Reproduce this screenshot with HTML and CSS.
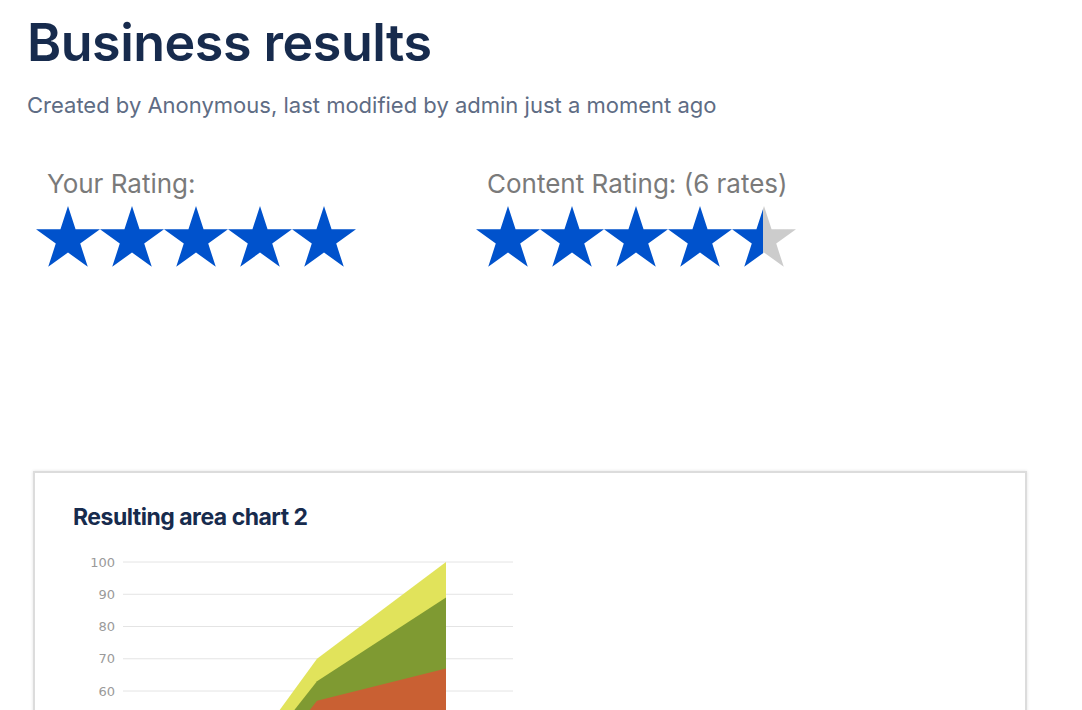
FILE: index.html
```html
<!DOCTYPE html>
<html lang="en">
<head>
    <meta charset="UTF-8">
    <meta name="viewport" content="width=device-width, initial-scale=1.0">
    <title>Business results</title>
    <link rel="stylesheet" href="styles.css">
</head>
<body>
    <div class="page">
        <h1 class="page-title">Business results</h1>
        <p class="page-meta">Created by Anonymous, last modified by admin just a moment ago</p>

        <div class="ratings">
            <div class="rating">
                <div class="rating-label">Your Rating:</div>
                <div class="stars">
                    <svg class="star" viewBox="0 0 64 61"><polygon class="on" points="32,0 39.55,23.25 64,23.25 44.22,37.62 51.78,60.87 32,46.5 12.22,60.87 19.78,37.62 0,23.25 24.45,23.25"/></svg>
                    <svg class="star" viewBox="0 0 64 61"><polygon class="on" points="32,0 39.55,23.25 64,23.25 44.22,37.62 51.78,60.87 32,46.5 12.22,60.87 19.78,37.62 0,23.25 24.45,23.25"/></svg>
                    <svg class="star" viewBox="0 0 64 61"><polygon class="on" points="32,0 39.55,23.25 64,23.25 44.22,37.62 51.78,60.87 32,46.5 12.22,60.87 19.78,37.62 0,23.25 24.45,23.25"/></svg>
                    <svg class="star" viewBox="0 0 64 61"><polygon class="on" points="32,0 39.55,23.25 64,23.25 44.22,37.62 51.78,60.87 32,46.5 12.22,60.87 19.78,37.62 0,23.25 24.45,23.25"/></svg>
                    <svg class="star" viewBox="0 0 64 61"><polygon class="on" points="32,0 39.55,23.25 64,23.25 44.22,37.62 51.78,60.87 32,46.5 12.22,60.87 19.78,37.62 0,23.25 24.45,23.25"/></svg>
                </div>
            </div>
            <div class="rating">
                <div class="rating-label">Content Rating: (6 rates)</div>
                <div class="stars">
                    <svg class="star" viewBox="0 0 64 61"><polygon class="on" points="32,0 39.55,23.25 64,23.25 44.22,37.62 51.78,60.87 32,46.5 12.22,60.87 19.78,37.62 0,23.25 24.45,23.25"/></svg>
                    <svg class="star" viewBox="0 0 64 61"><polygon class="on" points="32,0 39.55,23.25 64,23.25 44.22,37.62 51.78,60.87 32,46.5 12.22,60.87 19.78,37.62 0,23.25 24.45,23.25"/></svg>
                    <svg class="star" viewBox="0 0 64 61"><polygon class="on" points="32,0 39.55,23.25 64,23.25 44.22,37.62 51.78,60.87 32,46.5 12.22,60.87 19.78,37.62 0,23.25 24.45,23.25"/></svg>
                    <svg class="star" viewBox="0 0 64 61"><polygon class="on" points="32,0 39.55,23.25 64,23.25 44.22,37.62 51.78,60.87 32,46.5 12.22,60.87 19.78,37.62 0,23.25 24.45,23.25"/></svg>
                    <svg class="star" viewBox="0 0 64 61">
                        <defs>
                            <linearGradient id="halfStar">
                                <stop offset="49%" stop-color="#0052cc"/>
                                <stop offset="49%" stop-color="#cccccc"/>
                            </linearGradient>
                        </defs>
                        <polygon fill="url(#halfStar)" points="32,0 39.55,23.25 64,23.25 44.22,37.62 51.78,60.87 32,46.5 12.22,60.87 19.78,37.62 0,23.25 24.45,23.25"/>
                    </svg>
                </div>
            </div>
        </div>

        <div class="chart-card">
            <h3 class="chart-title">Resulting area chart 2</h3>
            <svg class="chart" width="460" height="380" viewBox="0 0 460 380">
                <g class="grid">
                    <line x1="50" y1="14" x2="440" y2="14"/>
                    <line x1="50" y1="46.25" x2="440" y2="46.25"/>
                    <line x1="50" y1="78.5" x2="440" y2="78.5"/>
                    <line x1="50" y1="110.75" x2="440" y2="110.75"/>
                    <line x1="50" y1="143" x2="440" y2="143"/>
                    <line x1="50" y1="175.25" x2="440" y2="175.25"/>
                    <line x1="50" y1="207.5" x2="440" y2="207.5"/>
                    <line x1="50" y1="239.75" x2="440" y2="239.75"/>
                    <line x1="50" y1="272" x2="440" y2="272"/>
                    <line x1="50" y1="304.25" x2="440" y2="304.25"/>
                    <line x1="50" y1="336.5" x2="440" y2="336.5"/>
                </g>
                <g class="axis-labels">
                    <text x="42" y="18.5">100</text>
                    <text x="42" y="50.75">90</text>
                    <text x="42" y="83">80</text>
                    <text x="42" y="115.25">70</text>
                    <text x="42" y="147.5">60</text>
                    <text x="42" y="179.75">50</text>
                    <text x="42" y="212">40</text>
                    <text x="42" y="244.25">30</text>
                    <text x="42" y="276.5">20</text>
                    <text x="42" y="308.75">10</text>
                    <text x="42" y="341">0</text>
                </g>
                <polygon fill="#e1e35b" points="115,288 244,110.75 373,14 373,336.5 115,336.5"/>
                <polygon fill="#7f9a32" points="115,297 244,133.3 373,49.5 373,336.5 115,336.5"/>
                <polygon fill="#c96033" points="115,318 244,152.7 373,120.4 373,336.5 115,336.5"/>
            </svg>
        </div>
    </div>
</body>
</html>
```

FILE: styles.css
```css
body {
    margin: 0;
    background: #ffffff;
    font-family: Inter, "Noto Sans", sans-serif;
}
.page {
    padding: 10px 27px 40px;
}
.page-title {
    margin: 0;
    font-size: 52px;
    font-weight: 600;
    line-height: 66px;
    color: #172b4d;
    letter-spacing: -0.5px;
}
.page-meta {
    margin: 15px 0 0;
    font-size: 22px;
    line-height: 28px;
    color: #5e6c84;
}
.ratings {
    display: flex;
    margin-top: 49px;
    padding-left: 9px;
}
.rating {
    width: 440px;
}
.rating-label {
    padding-left: 11px;
    font-size: 26px;
    line-height: 32px;
    color: #7a7a7a;
}
.stars {
    display: flex;
    margin-top: 6px;
}
.star {
    display: block;
    width: 64px;
    height: 61px;
}
.star .on {
    fill: #0052cc;
}
.chart-card {
    margin: 204px 28px 0 6px;
    padding: 30px 38px 40px;
    border: 2px solid #dcdcdc;
    box-shadow: 0 0 3px rgba(0, 0, 0, 0.12);
    background: #ffffff;
}
.chart-title {
    margin: 0;
    font-size: 23px;
    font-weight: 700;
    line-height: 28px;
    color: #172b4d;
    letter-spacing: -0.5px;
}
.chart {
    display: block;
    margin-top: 17px;
}
.grid line {
    stroke: #e4e4e4;
    stroke-width: 1;
}
.axis-labels text {
    font-family: "DejaVu Sans", sans-serif;
    font-size: 13px;
    fill: #9a9a9a;
    text-anchor: end;
}
```
